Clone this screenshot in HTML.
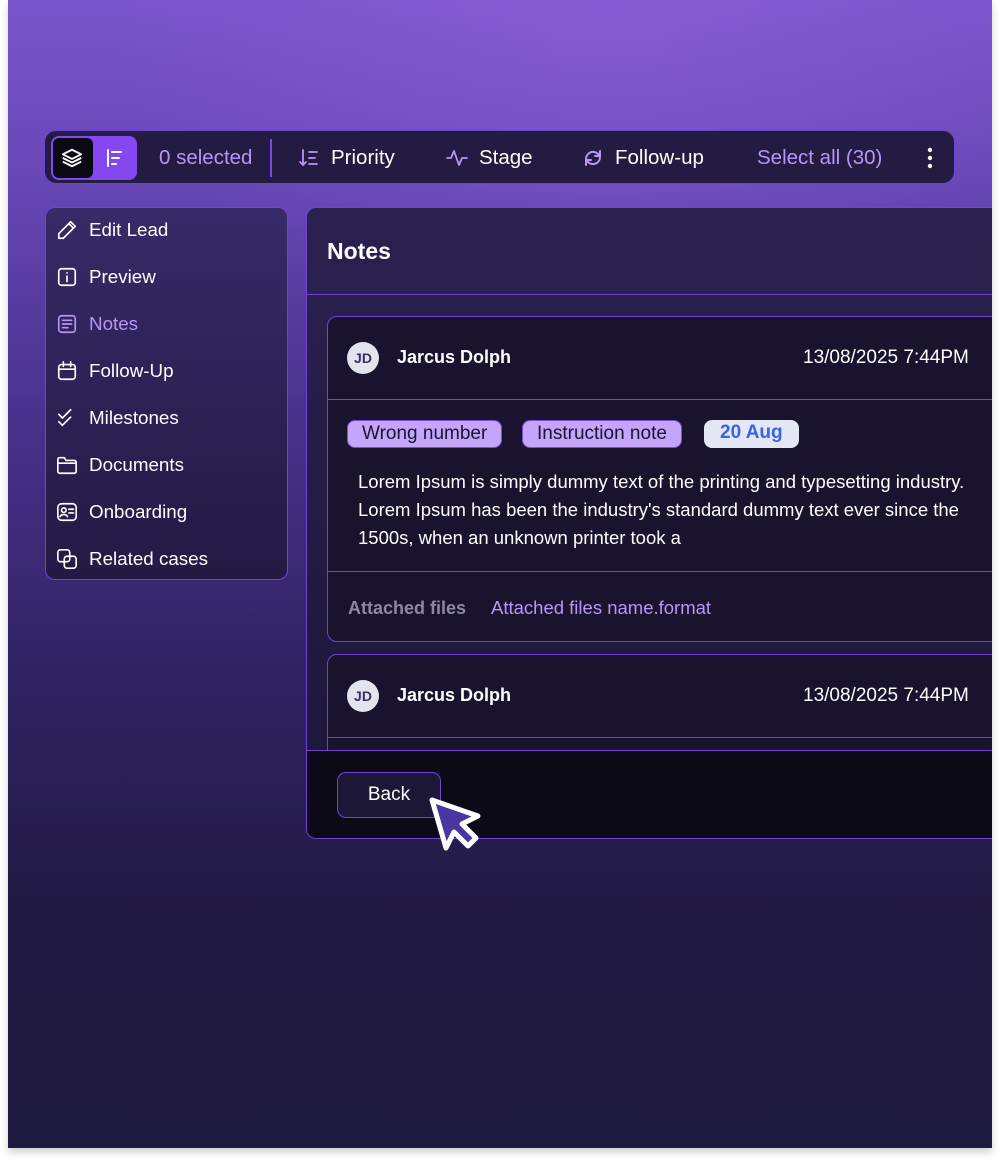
<!DOCTYPE html>
<html><head><meta charset="utf-8"><style>
*{box-sizing:border-box;margin:0;padding:0}
body{width:1000px;height:1164px;background:#fff;font-family:"Liberation Sans",sans-serif;position:relative;overflow:hidden}
#bg{position:absolute;left:8px;top:0;width:984px;height:1148px;overflow:hidden;
background:radial-gradient(ellipse 500px 300px at 600px 20px,rgba(140,95,215,.6),transparent),linear-gradient(180deg,#7a55cc 0%,#6a48b8 14%,#4a3390 35%,#2e2260 60%,#211a42 80%,#1f1a40 100%);box-shadow:0 4px 8px rgba(0,0,0,.2)}
.abs{position:absolute}
#tb{left:36px;top:130px;width:911px;height:54px;border-radius:12px;background:#231b42;border:1px solid #6d44d4}
#tg{left:6px;top:5px;width:86px;height:44px;border-radius:8px;background:#8348f0}
#tg .b{position:absolute;left:2px;top:2px;width:40px;height:40px;border-radius:6px;background:#0b0914}
.t{position:absolute;font-size:20.5px;color:#fff;top:15px;white-space:nowrap}
.lp{color:#b995f5}
#sb{left:37px;top:207px;width:243px;height:373px;border-radius:10px;border:1px solid #6d44d4;background:linear-gradient(180deg,#372a68,#231a44)}
.it{position:absolute;left:10px;height:24px;font-size:18.8px;color:#fff;display:flex;align-items:center}
.it svg{width:22px;height:22px;margin-right:11px;fill:none;stroke:#fff;stroke-width:1.8;stroke-linecap:round;stroke-linejoin:round}
#mp{left:298px;top:207px;width:720px;height:632px;border-radius:10px;border:1px solid #6d44d4;background:linear-gradient(180deg,#2b2150,#1c1638);overflow:hidden}
.card{position:absolute;left:20px;width:700px;border:1px solid #6d44d4;border-radius:10px;background:#19132e}
.hdr{height:83px;border-bottom:1px solid #6d44d4;position:relative}
.av{position:absolute;left:19px;top:25px;width:32px;height:32px;border-radius:50%;background:#e4e4ee;color:#3a3060;font-size:14px;font-weight:bold;text-align:center;line-height:32px}
.nm{position:absolute;left:69px;top:30px;font-size:18px;font-weight:bold;color:#fff}
.dt{position:absolute;left:475px;top:30px;font-size:19px;color:#fff}
.tag{position:absolute;top:20px;height:28px;border-radius:8px;font-size:19px;line-height:26px;padding:0 14px}
.pt{background:#c4a5fa;border:1px solid #7a4be0;color:#1a1430}
</style></head><body>
<div id="bg">
 <div id="tb" class="abs">
  <div id="tg" class="abs"><div class="b"></div>
   <svg class="abs" style="left:10px;top:11px" width="22" height="22" viewBox="0 0 24 24" fill="none" stroke="#fff" stroke-width="2" stroke-linejoin="round"><path d="M12 3 2 8l10 5 10-5z"/><path d="M2 12l10 5 10-5M2 16l10 5 10-5"/></svg>
   <svg class="abs" style="left:54px;top:12px" width="20" height="20" viewBox="0 0 20 20" stroke="#fff" stroke-width="2" stroke-linecap="round"><path d="M3 2v16M7 4h9M7 10h7M7 16h4"/></svg>
  </div>
  <div class="t lp" style="left:114px">0 selected</div>
  <div class="abs" style="left:225px;top:8px;width:2px;height:38px;background:#7a4be0"></div>
  <svg class="abs" style="left:253px;top:16px" width="22" height="22" viewBox="0 0 22 22" fill="none" stroke="#b995f5" stroke-width="1.8" stroke-linecap="round"><path d="M5 3v15M2 15l3 3 3-3M11 5h8M11 11h6M11 17h8"/></svg>
  <div class="t" style="left:286px">Priority</div>
  <svg class="abs" style="left:401px;top:16px" width="22" height="22" viewBox="0 0 22 22" fill="none" stroke="#b995f5" stroke-width="1.8" stroke-linecap="round" stroke-linejoin="round"><path d="M1 11h4l3-7 5 14 3-7h5"/></svg>
  <div class="t" style="left:434px">Stage</div>
  <svg class="abs" style="left:537px;top:16px" width="22" height="22" viewBox="0 0 22 22" fill="none" stroke="#b995f5" stroke-width="2" stroke-linecap="round" stroke-linejoin="round"><path d="M4 12a7 7 0 0 1 12-5l2 2M18 10a7 7 0 0 1-12 5l-2-2M18 4v5h-5M4 18v-5h5"/></svg>
  <div class="t" style="left:570px">Follow-up</div>
  <div class="t lp" style="left:712px">Select all (30)</div>
  <svg class="abs" style="left:882px;top:16px" width="6" height="22"><circle cx="3" cy="3" r="2.2" fill="#fff"/><circle cx="3" cy="11" r="2.2" fill="#fff"/><circle cx="3" cy="19" r="2.2" fill="#fff"/></svg>
 </div>

 <div id="sb" class="abs">
  <div class="it" style="top:10px"><svg viewBox="0 0 24 24"><path d="M16 3l5 5L8 21H3v-5z M14 5l5 5"/></svg>Edit Lead</div>
  <div class="it" style="top:57px"><svg viewBox="0 0 24 24"><rect x="3" y="3" width="18" height="18" rx="3"/><path d="M12 11v6M12 7.5v.1"/></svg>Preview</div>
  <div class="it" style="top:104px;color:#b995f5"><svg viewBox="0 0 24 24" style="stroke:#b995f5"><rect x="3" y="3" width="18" height="18" rx="3"/><path d="M7 8h10M7 12h10M7 16h6"/></svg>Notes</div>
  <div class="it" style="top:151px"><svg viewBox="0 0 24 24"><rect x="3" y="5" width="18" height="16" rx="3"/><path d="M3 10h18M8 2v5M16 2v5"/></svg>Follow-Up</div>
  <div class="it" style="top:198px"><svg viewBox="0 0 24 24"><path d="M3 8l4 4 9-9M3 16l4 4 9-9"/></svg>Milestones</div>
  <div class="it" style="top:245px"><svg viewBox="0 0 24 24"><path d="M2 6a2 2 0 0 1 2-2h5l2 3h9a2 2 0 0 1 2 2v10a2 2 0 0 1-2 2H4a2 2 0 0 1-2-2z M2 10h20"/></svg>Documents</div>
  <div class="it" style="top:292px"><svg viewBox="0 0 24 24"><rect x="2" y="3" width="20" height="18" rx="4"/><circle cx="8.5" cy="10" r="2.5"/><path d="M4.5 17c1-3 7-3 8 0M14 9h5M14 13h5"/></svg>Onboarding</div>
  <div class="it" style="top:339px"><svg viewBox="0 0 24 24"><rect x="2" y="2" width="13" height="13" rx="3"/><rect x="9" y="9" width="13" height="13" rx="3"/></svg>Related cases</div>
 </div>

 <div id="mp" class="abs">
  <div class="abs" style="left:20px;top:30px;font-size:23px;font-weight:bold;color:#fff">Notes</div>
  <div class="abs" style="left:0;top:86px;width:100%;height:1px;background:#6d44d4"></div>
  <div class="card" style="top:108px;height:326px">
   <div class="hdr"><div class="av">JD</div><div class="nm">Jarcus Dolph</div><div class="dt">13/08/2025 7:44PM</div></div>
   <div style="position:relative;height:172px;border-bottom:1px solid #6d44d4">
    <div class="tag pt" style="left:19px">Wrong number</div>
    <div class="tag pt" style="left:194px">Instruction note</div>
    <div class="tag" style="left:376px;background:#e3e6f3;color:#3a62e8;font-weight:bold;padding:0 16px">20 Aug</div>
    <div class="abs" style="left:30px;top:68px;width:700px;font-size:18.5px;line-height:28px;color:#fff;white-space:nowrap">Lorem Ipsum is simply dummy text of the printing and typesetting industry.<br>Lorem Ipsum has been the industry's standard dummy text ever since the<br>1500s, when an unknown printer took a</div>
   </div>
   <div class="abs" style="left:20px;top:281px;font-size:18px;color:#8d88a0;font-weight:bold">Attached files</div>
   <div class="abs" style="left:163px;top:280px;font-size:18.5px;color:#b995f5">Attached files name.format</div>
  </div>
  <div class="card" style="top:446px;height:200px">
   <div class="hdr"><div class="av">JD</div><div class="nm">Jarcus Dolph</div><div class="dt">13/08/2025 7:44PM</div></div>
  </div>
  <div class="abs" style="left:0;top:542px;width:100%;height:90px;background:#0c0a16;border-top:1px solid #6d44d4"></div>
  <div class="abs" style="left:30px;top:564px;width:104px;height:46px;border-radius:9px;border:1px solid #6d44d4;background:#1c1736;color:#fff;font-size:19px;text-align:center;line-height:44px">Back</div>
 </div>
 <svg class="abs" style="left:418px;top:794px" width="62" height="62" viewBox="0 0 62 62"><path d="M6 6 L20 54 L28 38 L42 52 L50 44 L36 30 L52 22 Z" fill="#4a36a0" stroke="#fff" stroke-width="5" stroke-linejoin="round"/></svg>
</div>
</body></html>
